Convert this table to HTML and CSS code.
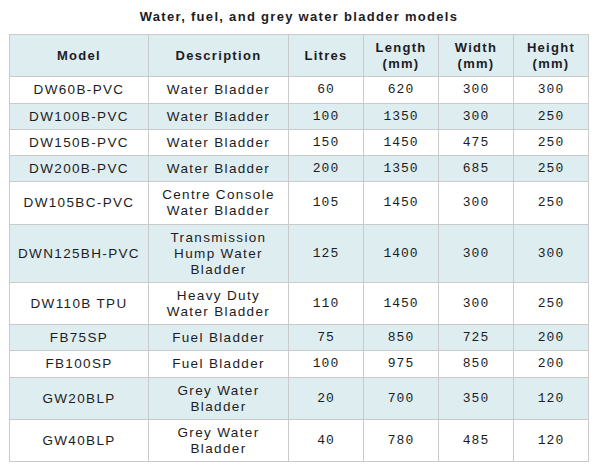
FILE: index.html
```html
<!DOCTYPE html>
<html>
<head>
<meta charset="utf-8">
<link rel="stylesheet" href="styles.css">
</head>
<body>
<div class="wrap">
  <h1 class="caption">Water, fuel, and grey water bladder models</h1>
  <table class="models">
    <colgroup>
      <col class="c-model"><col class="c-desc"><col class="c-num"><col class="c-num"><col class="c-num"><col class="c-num">
    </colgroup>
    <thead>
      <tr><th>Model</th><th>Description</th><th>Litres</th><th>Length<br>(mm)</th><th>Width<br>(mm)</th><th>Height<br>(mm)</th></tr>
    </thead>
    <tbody>
      <tr><td>DW60B-PVC</td><td>Water Bladder</td><td class="n">60</td><td class="n">620</td><td class="n">300</td><td class="n">300</td></tr>
      <tr><td>DW100B-PVC</td><td>Water Bladder</td><td class="n">100</td><td class="n">1350</td><td class="n">300</td><td class="n">250</td></tr>
      <tr><td>DW150B-PVC</td><td>Water Bladder</td><td class="n">150</td><td class="n">1450</td><td class="n">475</td><td class="n">250</td></tr>
      <tr><td>DW200B-PVC</td><td>Water Bladder</td><td class="n">200</td><td class="n">1350</td><td class="n">685</td><td class="n">250</td></tr>
      <tr><td>DW105BC-PVC</td><td>Centre Console<br>Water Bladder</td><td class="n">105</td><td class="n">1450</td><td class="n">300</td><td class="n">250</td></tr>
      <tr><td>DWN125BH-PVC</td><td>Transmission<br>Hump Water<br>Bladder</td><td class="n">125</td><td class="n">1400</td><td class="n">300</td><td class="n">300</td></tr>
      <tr><td>DW110B TPU</td><td>Heavy Duty<br>Water Bladder</td><td class="n">110</td><td class="n">1450</td><td class="n">300</td><td class="n">250</td></tr>
      <tr><td>FB75SP</td><td>Fuel Bladder</td><td class="n">75</td><td class="n">850</td><td class="n">725</td><td class="n">200</td></tr>
      <tr><td>FB100SP</td><td>Fuel Bladder</td><td class="n">100</td><td class="n">975</td><td class="n">850</td><td class="n">200</td></tr>
      <tr><td>GW20BLP</td><td>Grey Water<br>Bladder</td><td class="n">20</td><td class="n">700</td><td class="n">350</td><td class="n">120</td></tr>
      <tr><td>GW40BLP</td><td>Grey Water<br>Bladder</td><td class="n">40</td><td class="n">780</td><td class="n">485</td><td class="n">120</td></tr>
    </tbody>
  </table>
</div>
</body>
</html>
```
FILE: styles.css
```css
html, body {
  margin: 0;
  padding: 0;
  background: #ffffff;
}
body {
  padding: 8px 9px;
  font-family: "Liberation Sans", Arial, sans-serif;
  color: #1c1c24;
}
.wrap {
  width: 580px;
}
.caption {
  margin: 0 0 9px 0;
  font-size: 13px;
  line-height: 17px;
  font-weight: bold;
  letter-spacing: 1.3px;
  text-align: center;
}
.models {
  width: 580px;
  border-collapse: collapse;
  table-layout: fixed;
  font-size: 13.5px;
  letter-spacing: 1.35px;
}
.c-model { width: 139px; }
.c-desc { width: 140px; }
.c-num { width: 75px; }
.models th,
.models td {
  border: 1px solid #cacaca;
  text-align: center;
  vertical-align: middle;
  padding: 4.5px 2px;
  line-height: 16px;
}
.models tbody tr:nth-child(4n+1) td {
  padding-top: 5px;
  padding-bottom: 5px;
}
.models th {
  background: #deedf0;
  font-weight: bold;
  font-size: 13px;
  letter-spacing: 1.3px;
}
.models tbody tr:nth-child(even) td {
  background: #deedf0;
}
.models td.n {
  font-family: "Liberation Mono", "DejaVu Sans Mono", monospace;
  font-size: 13px;
  letter-spacing: 1px;
}
```
